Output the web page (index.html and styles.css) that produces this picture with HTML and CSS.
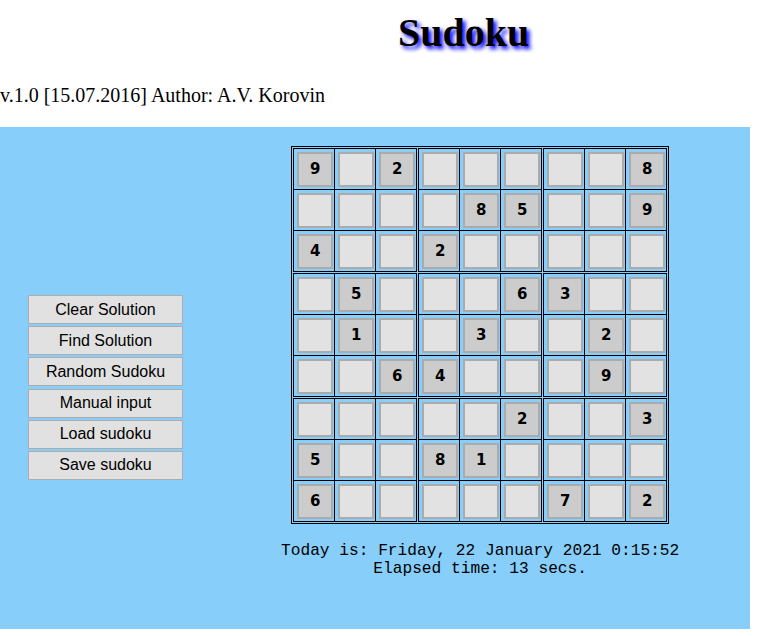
FILE: index.html
```html
<!DOCTYPE html>
<html>
<head>
<meta charset="utf-8">
<title>Sudoku</title>
<link rel="stylesheet" href="styles.css">
</head>
<body>
<h1 class="title">Sudoku</h1>
<div class="version">v.1.0 [15.07.2016] Author: A.V. Korovin</div>
<div class="panel">
  <div class="controls">
    <button class="btn">Clear Solution</button>
    <button class="btn">Find Solution</button>
    <button class="btn">Random Sudoku</button>
    <button class="btn">Manual input</button>
    <button class="btn">Load sudoku</button>
    <button class="btn">Save sudoku</button>
  </div>
  <div class="board-area">
    <table class="board">
      <tr>
        <td class="block-td"><table class="block">
          <tr><td><div class="cell given">9</div></td><td><div class="cell"></div></td><td><div class="cell given">2</div></td></tr>
          <tr><td><div class="cell"></div></td><td><div class="cell"></div></td><td><div class="cell"></div></td></tr>
          <tr><td><div class="cell given">4</div></td><td><div class="cell"></div></td><td><div class="cell"></div></td></tr>
        </table></td>
        <td class="block-td"><table class="block">
          <tr><td><div class="cell"></div></td><td><div class="cell"></div></td><td><div class="cell"></div></td></tr>
          <tr><td><div class="cell"></div></td><td><div class="cell given">8</div></td><td><div class="cell given">5</div></td></tr>
          <tr><td><div class="cell given">2</div></td><td><div class="cell"></div></td><td><div class="cell"></div></td></tr>
        </table></td>
        <td class="block-td"><table class="block">
          <tr><td><div class="cell"></div></td><td><div class="cell"></div></td><td><div class="cell given">8</div></td></tr>
          <tr><td><div class="cell"></div></td><td><div class="cell"></div></td><td><div class="cell given">9</div></td></tr>
          <tr><td><div class="cell"></div></td><td><div class="cell"></div></td><td><div class="cell"></div></td></tr>
        </table></td>
      </tr>
      <tr>
        <td class="block-td"><table class="block">
          <tr><td><div class="cell"></div></td><td><div class="cell given">5</div></td><td><div class="cell"></div></td></tr>
          <tr><td><div class="cell"></div></td><td><div class="cell given">1</div></td><td><div class="cell"></div></td></tr>
          <tr><td><div class="cell"></div></td><td><div class="cell"></div></td><td><div class="cell given">6</div></td></tr>
        </table></td>
        <td class="block-td"><table class="block">
          <tr><td><div class="cell"></div></td><td><div class="cell"></div></td><td><div class="cell given">6</div></td></tr>
          <tr><td><div class="cell"></div></td><td><div class="cell given">3</div></td><td><div class="cell"></div></td></tr>
          <tr><td><div class="cell given">4</div></td><td><div class="cell"></div></td><td><div class="cell"></div></td></tr>
        </table></td>
        <td class="block-td"><table class="block">
          <tr><td><div class="cell given">3</div></td><td><div class="cell"></div></td><td><div class="cell"></div></td></tr>
          <tr><td><div class="cell"></div></td><td><div class="cell given">2</div></td><td><div class="cell"></div></td></tr>
          <tr><td><div class="cell"></div></td><td><div class="cell given">9</div></td><td><div class="cell"></div></td></tr>
        </table></td>
      </tr>
      <tr>
        <td class="block-td"><table class="block">
          <tr><td><div class="cell"></div></td><td><div class="cell"></div></td><td><div class="cell"></div></td></tr>
          <tr><td><div class="cell given">5</div></td><td><div class="cell"></div></td><td><div class="cell"></div></td></tr>
          <tr><td><div class="cell given">6</div></td><td><div class="cell"></div></td><td><div class="cell"></div></td></tr>
        </table></td>
        <td class="block-td"><table class="block">
          <tr><td><div class="cell"></div></td><td><div class="cell"></div></td><td><div class="cell given">2</div></td></tr>
          <tr><td><div class="cell given">8</div></td><td><div class="cell given">1</div></td><td><div class="cell"></div></td></tr>
          <tr><td><div class="cell"></div></td><td><div class="cell"></div></td><td><div class="cell"></div></td></tr>
        </table></td>
        <td class="block-td"><table class="block">
          <tr><td><div class="cell"></div></td><td><div class="cell"></div></td><td><div class="cell given">3</div></td></tr>
          <tr><td><div class="cell"></div></td><td><div class="cell"></div></td><td><div class="cell"></div></td></tr>
          <tr><td><div class="cell given">7</div></td><td><div class="cell"></div></td><td><div class="cell given">2</div></td></tr>
        </table></td>
      </tr>
    </table>
    <div class="status">
      <div>Today is: Friday, 22 January 2021 0:15:52</div>
      <div>Elapsed time: 13 secs.</div>
    </div>
  </div>
</div>
</body>
</html>
```

FILE: styles.css
```css
html, body {
  margin: 0;
  padding: 0;
  background: #ffffff;
}
body {
  font-family: "Liberation Serif", "Times New Roman", serif;
  color: #000;
}
.title {
  margin: 10px 0 0 0;
  padding-left: 398px;
  height: 46px;
  font-size: 40px;
  line-height: 46px;
  font-weight: bold;
  font-family: "Liberation Serif", "Times New Roman", serif;
  text-shadow: 3px 3px 4px #0000ff;
}
.version {
  margin-top: 28px;
  height: 23px;
  line-height: 23px;
  font-size: 20px;
}
.panel {
  margin-top: 20px;
  width: 750px;
  height: 502px;
  box-sizing: border-box;
  background: #87cefa;
  display: flex;
  align-items: flex-start;
  padding: 19px 0 0 28px;
}
.controls {
  width: 155px;
  margin-top: 149px;
  display: flex;
  flex-direction: column;
  gap: 2.2px;
}
.btn {
  display: block;
  width: 155px;
  height: 29px;
  margin: 0;
  padding: 0;
  background: #e1e1e1;
  border: 1px solid #adadad;
  font-family: "Liberation Sans", Arial, sans-serif;
  font-size: 16px;
  color: #000;
}
.board-area {
  margin-left: 98px;
  display: flex;
  flex-direction: column;
  align-items: center;
}
.board {
  border: 1px solid #000;
  border-spacing: 1px;
}
.board td.block-td {
  padding: 0;
}
.block {
  border-collapse: collapse;
  border: 1px solid #000;
}
.block td {
  border: 1px solid #000;
  padding: 3px 1px 2px 3px;
  width: 36px;
  height: 35px;
}
.cell {
  width: 36px;
  height: 35px;
  box-sizing: border-box;
  border: 2px solid #ababab;
  background: #e2e2e2;
  font-family: "DejaVu Sans", Verdana, sans-serif;
  font-weight: bold;
  font-size: 15px;
  line-height: 31px;
  text-align: center;
}
.cell.given {
  background: #cccccc;
}
.status {
  margin-top: 18px;
  font-family: "Liberation Mono", "Courier New", monospace;
  font-size: 16.2px;
  line-height: 18px;
  text-align: center;
  white-space: nowrap;
}
```
